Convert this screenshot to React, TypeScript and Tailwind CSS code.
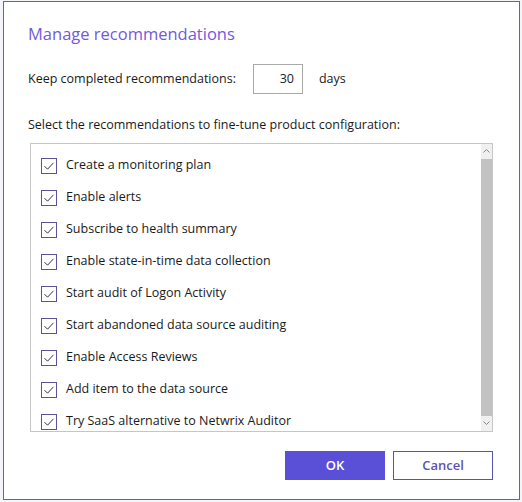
import React from 'react';

const items = [
  'Create a monitoring plan',
  'Enable alerts',
  'Subscribe to health summary',
  'Enable state-in-time data collection',
  'Start audit of Logon Activity',
  'Start abandoned data source auditing',
  'Enable Access Reviews',
  'Add item to the data source',
  'Try SaaS alternative to Netwrix Auditor',
];

function Check() {
  return (
    <span className="flex h-[16px] w-[16px] shrink-0 items-center justify-center border border-[#5b5299] bg-white">
      <svg width="12" height="12" viewBox="0 0 12 12" fill="none">
        <path d="M1.5 6.2 L4.5 9.2 L10.5 2.8" stroke="#333" strokeWidth="1" />
      </svg>
    </span>
  );
}

export default function App() {
  return (
    <div className="h-[502px] w-[522px] bg-[#f4f5fb] pl-[3px] pt-[1px] font-['Open_Sans',sans-serif]">
      <div className="flex h-[499px] w-[517px] flex-col border border-[#6a5db3] bg-white pl-[24px] pr-[26px]">
        <h1 className="mt-[20px] text-[16.5px] leading-[24px] text-[#7359dc]">Manage recommendations</h1>

        <div className="mt-[18px] flex items-center text-[12.5px] text-[#1a1a1a]">
          <span>Keep completed recommendations:</span>
          <div className="ml-[17px] flex h-[30px] w-[50px] items-center justify-end border border-[#a9a9a9] pr-[8px]">30</div>
          <span className="ml-[16px]">days</span>
        </div>

        <p className="mt-[22px] text-[12.5px] text-[#1a1a1a]">
          Select the recommendations to fine-tune product configuration:
        </p>

        <div className="mt-[8px] ml-[2px] flex h-[289px] w-[463px] border border-[#c6c6c6]">
          <ul className="flex-1 pl-[10px] pt-[6px]">
            {items.map((t) => (
              <li key={t} className="flex h-[32px] items-center gap-[9px] text-[12.5px] text-[#1a1a1a]">
                <Check />
                <span>{t}</span>
              </li>
            ))}
          </ul>
          <div className="flex w-[11px] flex-col bg-[#f0f0f0]">
            <div className="flex h-[15px] items-center justify-center">
              <svg width="7" height="4" viewBox="0 0 7 4" fill="none">
                <path d="M0.5 3.5 L3.5 0.5 L6.5 3.5" stroke="#888" strokeWidth="1" />
              </svg>
            </div>
            <div className="flex-1 bg-[#c2c2c2]" />
            <div className="flex h-[15px] items-center justify-center">
              <svg width="7" height="4" viewBox="0 0 7 4" fill="none">
                <path d="M0.5 0.5 L3.5 3.5 L6.5 0.5" stroke="#888" strokeWidth="1" />
              </svg>
            </div>
          </div>
        </div>

        <div className="mt-[19px] flex justify-end gap-[8px] pr-[0px]">
          <button className="h-[29px] w-[100px] bg-[#5a50d8] text-[13px] font-semibold text-white">OK</button>
          <button className="h-[29px] w-[100px] border border-[#5b53b0] bg-white text-[13px] font-semibold text-[#5b53b0]">
            Cancel
          </button>
        </div>
      </div>
    </div>
  );
}
